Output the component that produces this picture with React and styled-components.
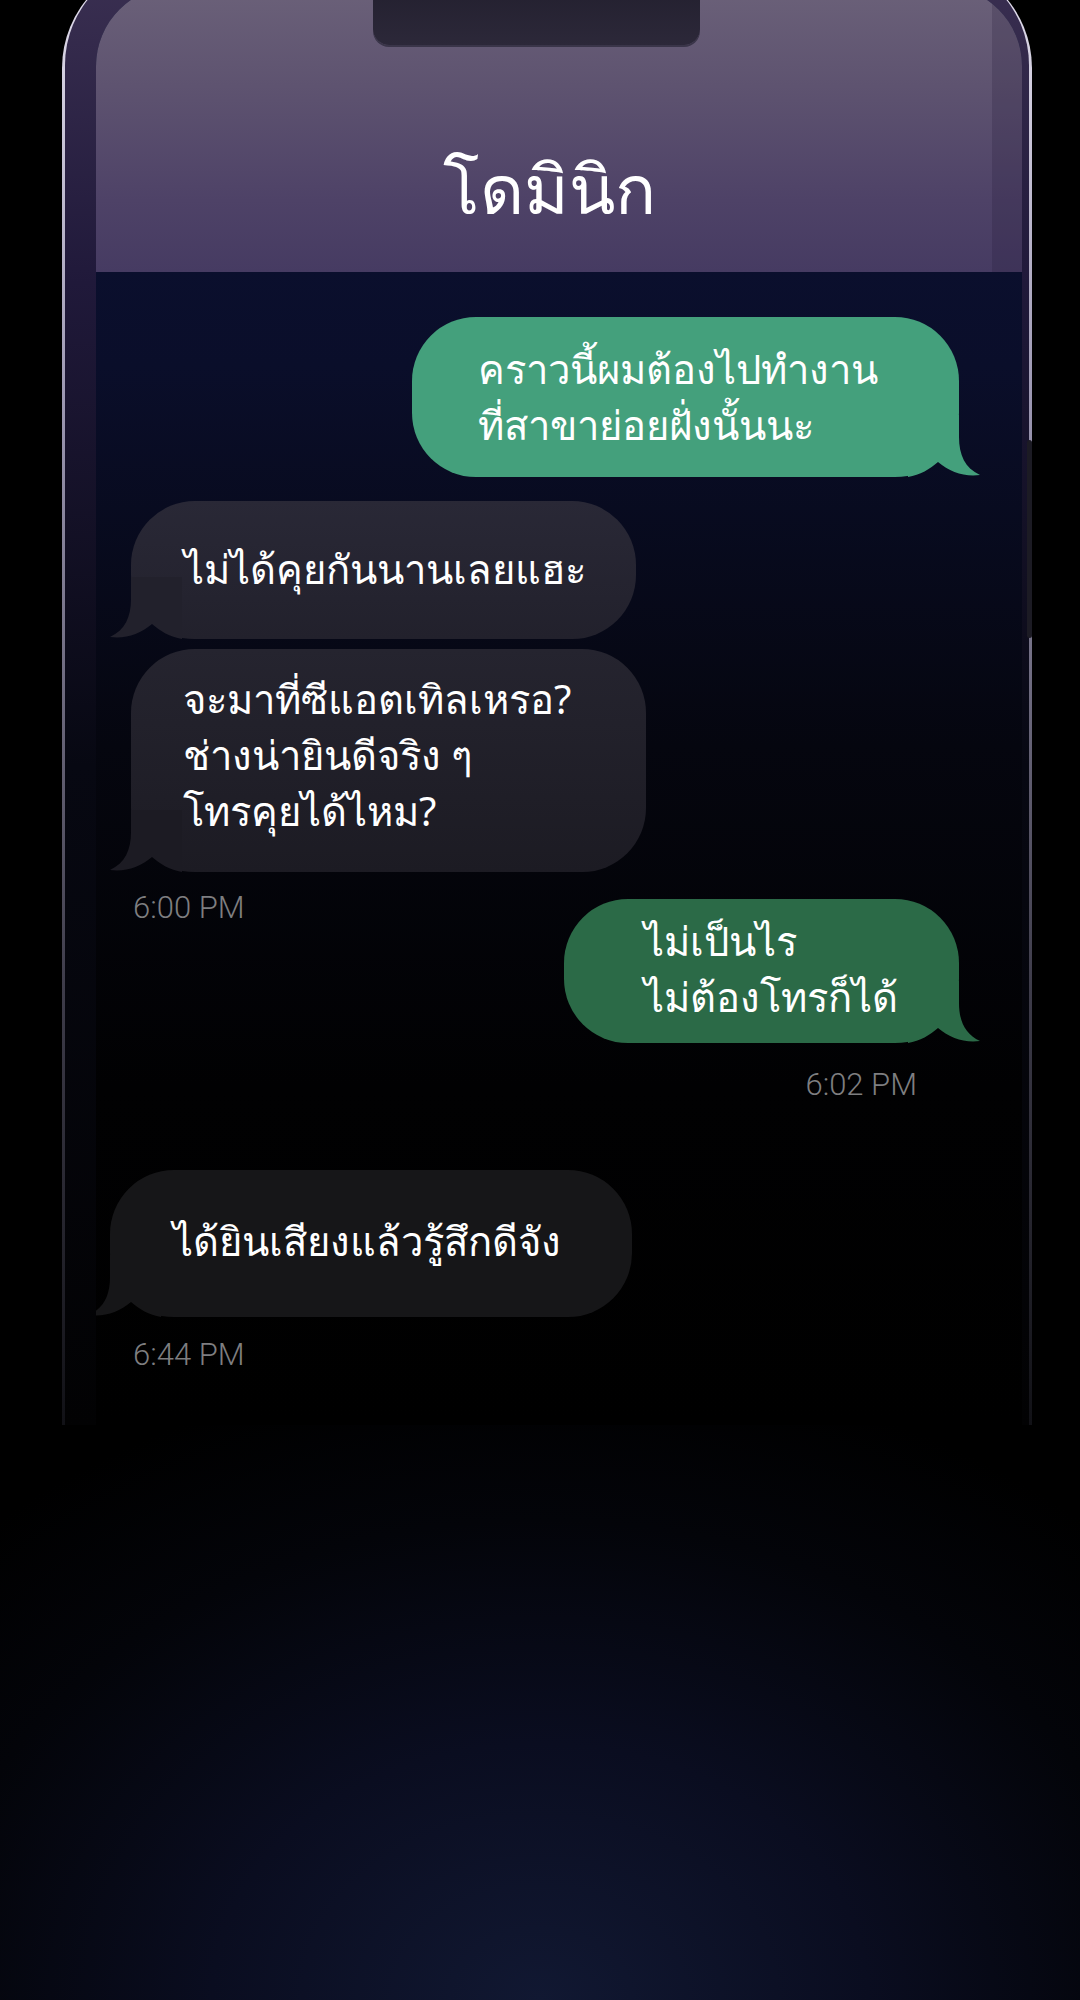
import React from "react";
import styled, { createGlobalStyle } from "styled-components";

const GlobalStyle = createGlobalStyle`
  html, body {
    margin: 0;
    padding: 0;
    background: #000;
  }
`;

const Page = styled.div`
  position: relative;
  width: 1080px;
  height: 2000px;
  overflow: hidden;
  background: radial-gradient(ellipse 820px 640px at 50% 100%, #111832 0%, #0a0d20 40%, #030409 75%, #000 100%), #000;
`;

const Rim = styled.div`
  position: relative;
  margin: -40px 0 0 62px;
  width: 970px;
  height: 1465px;
  box-sizing: border-box;
  padding: 0 3px;
  border-radius: 108px 108px 0 0;
  background: linear-gradient(to bottom, #e6e2f0 0%, #9c97b2 30%, #3e3c4a 70%, #111116 100%);
`;

const Bezel = styled.div`
  height: 100%;
  box-sizing: border-box;
  padding: 26px 7px 0 31px;
  border-radius: 105px 105px 0 0;
  background: linear-gradient(to bottom, #3b3052 0%, #20193a 22%, #070812 55%, #020203 100%);
`;

const SideButton = styled.div`
  position: absolute;
  right: 0;
  top: 480px;
  width: 5px;
  height: 198px;
  border-radius: 3px;
  background: #1c1b24;
`;

const Screen = styled.div`
  position: relative;
  height: 100%;
  border-radius: 80px 80px 0 0;
  overflow: hidden;
  background: linear-gradient(to bottom, #0c1236 0px, #0a0e2a 380px, #05060f 760px, #010102 1100px, #000 100%);
`;

const Notch = styled.div`
  position: absolute;
  left: 277px;
  top: 0;
  width: 327px;
  height: 59px;
  border-radius: 0 0 16px 16px;
  background: linear-gradient(to bottom, #23202f, #2c2839);
  box-shadow: 0 2px 0 #3a3549;
`;

const Header = styled.header`
  height: 286px;
  box-sizing: border-box;
  display: flex;
  justify-content: center;
  align-items: flex-end;
  padding-bottom: 42px;
  background: linear-gradient(to bottom, #6b6179 0%, #5e5370 35%, #4e4267 75%, #463b62 100%);
  box-shadow: inset -30px 0 0 rgba(30, 20, 50, 0.2);
`;

const Title = styled.h1`
  margin: 0 20px 0 0;
  font-family: "Noto Sans", "DejaVu Sans", sans-serif;
  font-weight: 400;
  font-size: 68px;
  line-height: 84px;
  color: #fff;
`;

const Thread = styled.div`
  display: flex;
  flex-direction: column;
  padding: 45px 63px 0 0;
`;

const Row = styled.div`
  display: flex;
  justify-content: ${({ $side }) => ($side === "right" ? "flex-end" : "space-between")};
  align-items: flex-start;
  margin-top: ${({ $gap }) => $gap || 0}px;
  padding-left: ${({ $indent }) => $indent || 0}px;
`;

const Bubble = styled.div`
  position: relative;
  box-sizing: border-box;
  width: ${({ $w }) => $w}px;
  min-height: ${({ $h }) => $h}px;
  padding: ${({ $pad }) => $pad};
  border-radius: 64px;
  background: ${({ $bg }) => $bg};
  color: #fff;
  font-family: "Noto Sans", "DejaVu Sans", sans-serif;
  font-size: 40px;
  line-height: 56px;
  white-space: pre-line;
`;

const TailSvg = styled.svg`
  position: absolute;
  bottom: 0;
  width: 72px;
  height: 62px;
  ${({ $side }) =>
    $side === "right"
      ? "right: -21px;"
      : "left: -21px; transform: scaleX(-1);"}
`;

const Stamp = styled.div`
  font-family: "Roboto", "Liberation Sans", sans-serif;
  font-weight: 300;
  font-size: 31px;
  line-height: 36px;
  color: #7e7e80;
  margin-top: ${({ $top }) => $top || 0}px;
  padding: ${({ $pad }) => $pad || 0};
`;

const Tail = ({ side, color }) => (
  <TailSvg $side={side} viewBox="0 0 72 62">
    <path
      d="M51 0 L51 22 C51 40 57 53 72 60 C56 62 42 57 30 47 C22 54 12 60 0 62 L0 0 Z"
      fill={color}
    />
  </TailSvg>
);

const Message = ({ side, bg, tail, w, h, pad, children }) => (
  <Bubble $bg={bg} $w={w} $h={h} $pad={pad}>
    {children}
    <Tail side={side} color={tail || bg} />
  </Bubble>
);

const App = () => (
  <>
    <GlobalStyle />
    <Page>
      <Rim>
        <SideButton />
        <Bezel>
          <Screen>
            <Notch />
            <Header>
              <Title>โดมินิก</Title>
            </Header>
            <Thread>
              <Row $side="right">
                <Message side="right" bg="#44a07c" w={547} h={160} pad="24px 20px 0 66px">
                  {"คราวนี้ผมต้องไปทำงาน\nที่สาขาย่อยฝั่งนั้นนะ"}
                </Message>
              </Row>
              <Row $side="left" $gap={24} $indent={35}>
                <Message side="left" bg="linear-gradient(to bottom, #292836, #22212c)" tail="#22212c" w={505} h={138} pad="40px 10px 0 53px">
                  ไม่ได้คุยกันนานเลยแฮะ
                </Message>
              </Row>
              <Row $side="left" $gap={10} $indent={35}>
                <Message side="left" bg="linear-gradient(to bottom, #25242f, #1c1b23)" tail="#1c1b23" w={515} h={223} pad="22px 10px 0 52px">
                  {"จะมาที่ซีแอตเทิลเหรอ?\nช่างน่ายินดีจริง ๆ\nโทรคุยได้ไหม?"}
                </Message>
              </Row>
              <Row $gap={27} $indent={37}>
                <Stamp $top={-9}>6:00 PM</Stamp>
                <Message side="right" bg="#2b6a47" w={395} h={144} pad="14px 10px 0 80px">
                  {"ไม่เป็นไร\nไม่ต้องโทรก็ได้"}
                </Message>
              </Row>
              <Row $side="right" $gap={24}>
                <Stamp $pad="0 42px 0 0">6:02 PM</Stamp>
              </Row>
              <Row $side="left" $gap={67} $indent={14}>
                <Message side="left" bg="#161618" w={522} h={147} pad="43px 10px 0 63px">
                  ได้ยินเสียงแล้วรู้สึกดีจัง
                </Message>
              </Row>
              <Row $gap={20} $indent={37}>
                <Stamp>6:44 PM</Stamp>
              </Row>
            </Thread>
          </Screen>
        </Bezel>
      </Rim>
    </Page>
  </>
);

export default App;
